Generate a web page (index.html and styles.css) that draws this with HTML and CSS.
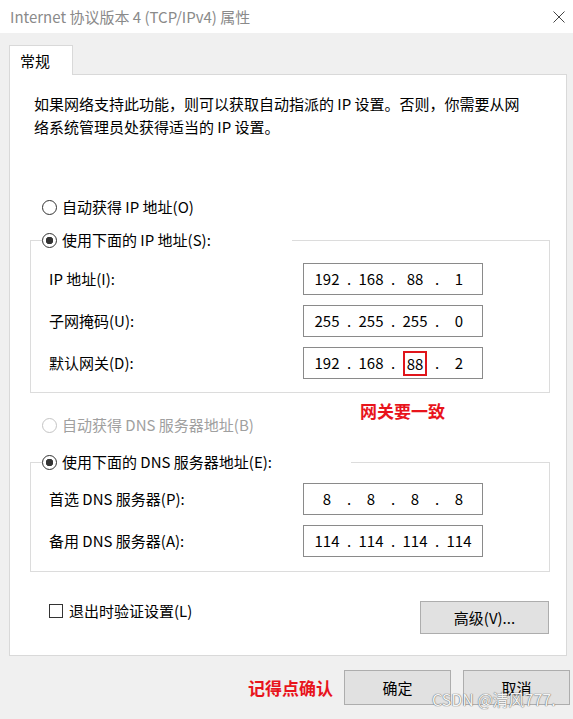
FILE: index.html
```html
<!DOCTYPE html>
<html lang="zh-CN">
<head>
    <meta charset="UTF-8">
    <title>Internet 协议版本 4 (TCP/IPv4) 属性</title>
    <link rel="stylesheet" href="styles.css">
</head>
<body>
    <div class="titlebar">
        <span class="title">Internet 协议版本 4 (TCP/IPv4) 属性</span>
        <svg class="close" width="12" height="12" viewBox="0 0 12 12">
            <path d="M0.5 0.5 L11.5 11.5 M11.5 0.5 L0.5 11.5" stroke="#444" stroke-width="1" fill="none"/>
        </svg>
    </div>

    <div class="dialog">
        <div class="tab">常规</div>
        <div class="panel">
            <p class="desc">如果网络支持此功能，则可以获取自动指派的 IP 设置。否则，你需要从网<br>络系统管理员处获得适当的 IP 设置。</p>

            <div class="radio-row row-auto-ip"><span class="radio"></span>自动获得 IP 地址(O)</div>

            <fieldset class="group group-ip">
                <legend class="radio-row legend-ip"><span class="radio checked"></span>使用下面的 IP 地址(S):</legend>
                <div class="fields">
                    <label>IP 地址(I):</label>
                    <div class="ip-box"><span class="octet">192</span><span class="dot">.</span><span class="octet">168</span><span class="dot">.</span><span class="octet">88</span><span class="dot">.</span><span class="octet">1</span></div>

                    <label>子网掩码(U):</label>
                    <div class="ip-box"><span class="octet">255</span><span class="dot">.</span><span class="octet">255</span><span class="dot">.</span><span class="octet">255</span><span class="dot">.</span><span class="octet">0</span></div>

                    <label>默认网关(D):</label>
                    <div class="ip-box"><span class="octet">192</span><span class="dot">.</span><span class="octet">168</span><span class="dot">.</span><span class="octet"><span class="mark">88</span></span><span class="dot">.</span><span class="octet">2</span></div>
                </div>
            </fieldset>

            <div class="note note-gateway">网关要一致</div>

            <div class="radio-row row-auto-dns disabled"><span class="radio"></span>自动获得 DNS 服务器地址(B)</div>

            <fieldset class="group group-dns">
                <legend class="radio-row legend-dns"><span class="radio checked"></span>使用下面的 DNS 服务器地址(E):</legend>
                <div class="fields">
                    <label>首选 DNS 服务器(P):</label>
                    <div class="ip-box"><span class="octet">8</span><span class="dot">.</span><span class="octet">8</span><span class="dot">.</span><span class="octet">8</span><span class="dot">.</span><span class="octet">8</span></div>

                    <label>备用 DNS 服务器(A):</label>
                    <div class="ip-box"><span class="octet">114</span><span class="dot">.</span><span class="octet">114</span><span class="dot">.</span><span class="octet">114</span><span class="dot">.</span><span class="octet">114</span></div>
                </div>
            </fieldset>

            <div class="panel-footer">
                <label class="check-row"><span class="checkbox"></span>退出时验证设置(L)</label>
                <button class="btn btn-advanced">高级(V)...</button>
            </div>
        </div>

        <div class="actions">
            <span class="note">记得点确认</span>
            <button class="btn btn-dialog">确定</button>
            <button class="btn btn-dialog">取消</button>
        </div>
    </div>

    <div class="watermark">CSDN @清风777.</div>
</body>
</html>
```

FILE: styles.css
```css
body {
    font-family: "Microsoft YaHei UI", "Noto Sans CJK SC", sans-serif;
    font-size: 15px;
    line-height: 20px;
    color: #000;
    background-color: #f0f0f0;
    margin: 0;
    width: 573px;
    height: 719px;
    position: relative;
    overflow: hidden;
}
.titlebar {
    height: 33px;
    background: #fff;
    display: flex;
    align-items: center;
    justify-content: space-between;
    padding: 0 8px 0 10px;
}
.title {
    color: #8a8a8a;
}
.dialog {
    padding: 12px 3px 0 9px;
}
.tab {
    position: relative;
    z-index: 1;
    box-sizing: border-box;
    width: 64px;
    height: 30px;
    line-height: 29px;
    padding-left: 10px;
    background: #fff;
    border: 1px solid #d9d9d9;
    border-bottom: none;
    margin-bottom: -1px;
}
.panel {
    position: relative;
    background: #fff;
    border: 1px solid #d9d9d9;
    margin-right: 3px;
    padding: 17px 16px 21px 20px;
}
.desc {
    margin: 0 0 0 4px;
    line-height: 23px;
    white-space: nowrap;
}

/* radio buttons */
.radio-row {
    display: flex;
    align-items: center;
    height: 20px;
}
.radio {
    box-sizing: border-box;
    width: 15px;
    height: 15px;
    border: 1px solid #333;
    border-radius: 50%;
    background: #fff;
    margin-right: 5px;
}
.radio.checked {
    background: radial-gradient(circle, #333 0 3.5px, #fff 4px);
}
.disabled {
    color: #a0a0a0;
}
.disabled .radio {
    border-color: #c4c4c4;
}
.row-auto-ip {
    margin: 59px 0 0 12px;
}
.row-auto-dns {
    margin: 22px 0 0 12px;
}

/* group boxes */
.group {
    margin: 0;
    border: 1px solid #dcdcdc;
    padding: 13px 66px 13px 18px;
}
.group-ip {
    margin-top: 13px;
}
.group-dns {
    margin-top: 17px;
    padding-top: 11px;
    padding-bottom: 14px;
}
.group legend {
    padding: 0;
    margin-left: -7px;
}
.legend-ip {
    width: 250px;
}
.legend-dns {
    width: 309px;
}
.fields {
    display: grid;
    grid-template-columns: 254px 180px;
    row-gap: 10px;
    align-items: center;
}
.ip-box {
    box-sizing: border-box;
    height: 32px;
    border: 1px solid #8a8a8a;
    padding-left: 5px;
    display: flex;
    align-items: center;
}
.octet {
    width: 36px;
    text-align: center;
}
.dot {
    width: 8px;
    text-align: center;
}
.mark {
    display: inline-block;
    border: 2px solid #e0151b;
    padding: 0 2px;
    line-height: 21px;
}

/* red notes */
.note {
    color: #e8141c;
    font-weight: bold;
    font-size: 17px;
}
.note-gateway {
    position: absolute;
    left: 350px;
    top: 326px;
}

/* footer inside the panel */
.panel-footer {
    display: flex;
    justify-content: space-between;
    align-items: flex-start;
    margin-top: 29px;
    padding: 0 1px 0 19px;
}
.check-row {
    display: flex;
    align-items: center;
    height: 20px;
}
.checkbox {
    box-sizing: border-box;
    width: 14px;
    height: 14px;
    border: 1px solid #333;
    background: #fff;
    margin-right: 6px;
}
.btn {
    font-family: inherit;
    font-size: 15px;
    color: #000;
    background: #e1e1e1;
    border: 1px solid #adadad;
    padding: 0;
}
.btn-advanced {
    width: 129px;
    height: 33px;
}
.actions {
    display: flex;
    justify-content: flex-end;
    align-items: center;
    gap: 12px;
    margin-top: 14px;
}
.actions .note {
    margin-right: -1px;
}
.btn-dialog {
    width: 107px;
    height: 35px;
}
.watermark {
    position: absolute;
    left: 432px;
    top: 689px;
    font-size: 16px;
    color: #f4f4f4;
    text-shadow: 0 0 1px #666, 0 0 1px #666;
}
```
